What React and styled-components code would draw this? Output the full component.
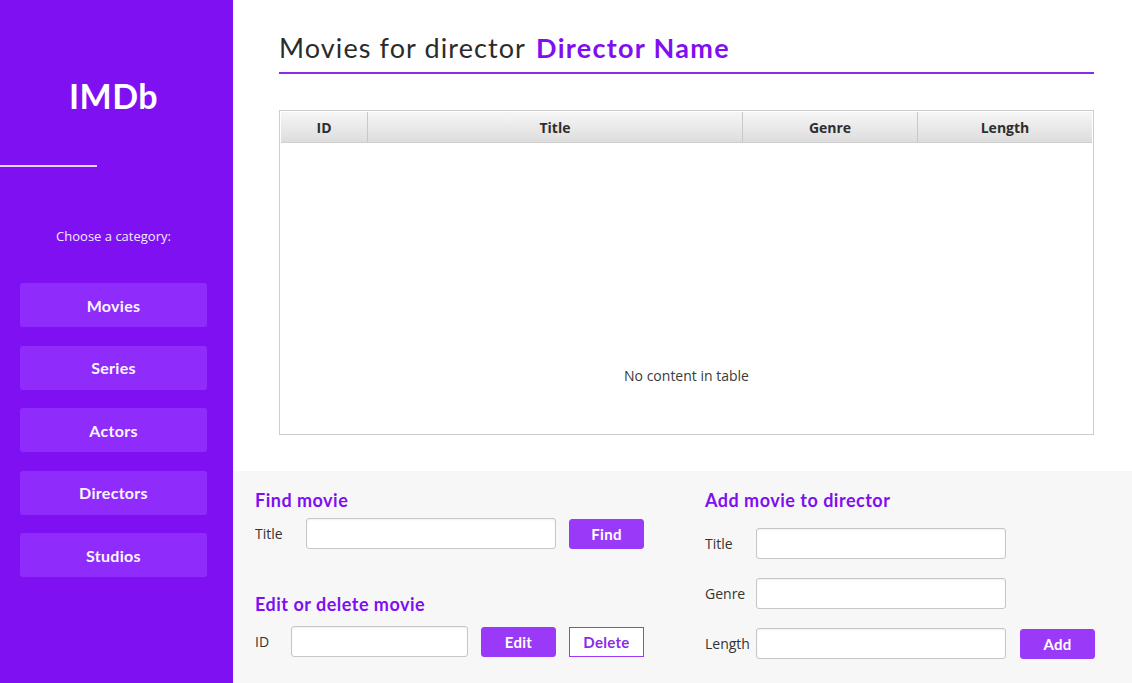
import React from "react";
import styled, { createGlobalStyle } from "styled-components";

const Global = createGlobalStyle`
  html, body { margin: 0; padding: 0; }
  body { font-family: "Open Sans", "Noto Sans", sans-serif; background: #fff; }
  * { box-sizing: border-box; }
`;

const GEO = `"Lato", "DejaVu Sans", sans-serif`;
const UI = `"Open Sans", "Noto Sans", sans-serif`;

const Page = styled.div`
  display: flex;
  width: 1132px;
  height: 683px;
  overflow: hidden;
`;

const Sidebar = styled.aside`
  width: 233px;
  flex: none;
  background: #7f10f2;
  display: flex;
  flex-direction: column;
  align-items: center;
  padding-right: 6px;
`;

const Logo = styled.h1`
  margin: 74px 0 0;
  font-family: ${GEO};
  font-weight: 700;
  font-size: 34px;
  line-height: 44px;
  color: #fff;
  letter-spacing: 0.5px;
`;

const Rule = styled.div`
  align-self: flex-start;
  width: 97px;
  height: 2px;
  margin-top: 47px;
  background: #e6d4fb;
`;

const Prompt = styled.p`
  margin: 60px 0 0;
  font-family: ${UI};
  font-size: 13px;
  line-height: 18px;
  color: #f3eafd;
`;

const Nav = styled.nav`
  display: flex;
  flex-direction: column;
  gap: 18.5px;
  margin-top: 38px;
`;

const NavButton = styled.button`
  width: 187px;
  height: 44px;
  border: none;
  border-radius: 3px;
  background: #8f2cfb;
  color: #fbf6ff;
  font-family: ${GEO};
  font-weight: 700;
  font-size: 16px;
  letter-spacing: 0.3px;
  cursor: pointer;
`;

const Main = styled.main`
  flex: 1;
  display: flex;
  flex-direction: column;
`;

const Top = styled.section`
  height: 471px;
  padding: 30px 38px 0 46px;
  background: #fff;
`;

const Heading = styled.h2`
  margin: 0;
  padding-bottom: 6px;
  border-bottom: 2px solid #8a2be8;
  display: flex;
  align-items: baseline;
  gap: 10px;
  font-family: ${GEO};
  font-weight: 400;
  font-size: 27px;
  line-height: 36px;
  letter-spacing: 1.1px;
  color: #2b2b2b;
`;

const Accent = styled.span`
  font-weight: 700;
  letter-spacing: 1.3px;
  color: #7f0ff0;
`;

const Table = styled.div`
  margin-top: 36px;
  height: 325px;
  border: 1px solid #cdcdcd;
  padding: 1px;
  display: flex;
  flex-direction: column;
  background: #fff;
`;

const HeadRow = styled.div`
  display: grid;
  grid-template-columns: 87px 375px 175px 1fr;
  height: 31px;
  background: linear-gradient(#f6f6f6, #dddddd);
  border-bottom: 1px solid #cfcfcf;
`;

const HeadCell = styled.div`
  display: flex;
  align-items: center;
  justify-content: center;
  border-right: 1px solid #c8c8c8;
  font-family: ${UI};
  font-weight: 700;
  font-size: 14px;
  color: #2e2e2e;
  &:last-child { border-right: none; }
`;

const Empty = styled.div`
  flex: 1;
  display: flex;
  align-items: flex-end;
  justify-content: center;
  padding-bottom: 48px;
  font-family: ${UI};
  font-size: 14px;
  color: #3a3a3a;
`;

const Bottom = styled.section`
  flex: 1;
  background: #f7f7f7;
  display: grid;
  grid-template-columns: 450px 1fr;
  padding: 18px 0 0 22px;
`;

const Column = styled.div`
  display: flex;
  flex-direction: column;
`;

const SectionTitle = styled.h3`
  margin: ${(p) => p.$mt || 0}px 0 0;
  font-family: ${GEO};
  font-weight: 700;
  font-size: 18px;
  line-height: 22px;
  letter-spacing: 0.5px;
  color: #7f0ff0;
`;

const Row = styled.div`
  display: flex;
  align-items: center;
  margin-top: ${(p) => p.$mt || 0}px;
  height: 31px;
`;

const Label = styled.label`
  width: ${(p) => p.$w}px;
  flex: none;
  font-family: ${UI};
  font-size: 14px;
  color: #333;
`;

const Input = styled.input`
  width: ${(p) => p.$w}px;
  height: 31px;
  flex: none;
  border: 1px solid #c6c6c6;
  border-radius: 3px;
  background: #fff;
  box-shadow: inset 0 1px 2px rgba(0, 0, 0, 0.06);
  outline: none;
`;

const Action = styled.button`
  width: ${(p) => p.$w || 75}px;
  height: 30px;
  flex: none;
  margin-left: ${(p) => p.$ml || 13}px;
  border-radius: ${(p) => (p.$outline ? 0 : 3)}px;
  border: 1px solid #9a3af8;
  background: ${(p) => (p.$outline ? "#fff" : "#9a3af8")};
  color: ${(p) => (p.$outline ? "#8a2be8" : "#fff")};
  font-family: ${GEO};
  font-weight: 700;
  font-size: 15px;
  letter-spacing: 0.3px;
  padding: 0;
  cursor: pointer;
`;

const categories = ["Movies", "Series", "Actors", "Directors", "Studios"];
const columns = ["ID", "Title", "Genre", "Length"];

export default function App() {
  return (
    <>
      <Global />
      <Page>
        <Sidebar>
          <Logo>IMDb</Logo>
          <Rule />
          <Prompt>Choose a category:</Prompt>
          <Nav>
            {categories.map((c) => (
              <NavButton key={c}>{c}</NavButton>
            ))}
          </Nav>
        </Sidebar>
        <Main>
          <Top>
            <Heading>
              Movies for director <Accent>Director Name</Accent>
            </Heading>
            <Table>
              <HeadRow>
                {columns.map((c) => (
                  <HeadCell key={c}>{c}</HeadCell>
                ))}
              </HeadRow>
              <Empty>No content in table</Empty>
            </Table>
          </Top>
          <Bottom>
            <Column>
              <SectionTitle>Find movie</SectionTitle>
              <Row $mt={7}>
                <Label $w={51}>Title</Label>
                <Input $w={250} />
                <Action $w={75}>Find</Action>
              </Row>
              <SectionTitle $mt={44}>Edit or delete movie</SectionTitle>
              <Row $mt={11}>
                <Label $w={36}>ID</Label>
                <Input $w={177} />
                <Action $w={75}>Edit</Action>
                <Action $w={75} $outline>
                  Delete
                </Action>
              </Row>
            </Column>
            <Column>
              <SectionTitle>Add movie to director</SectionTitle>
              <Row $mt={17}>
                <Label $w={51}>Title</Label>
                <Input $w={250} />
              </Row>
              <Row $mt={19}>
                <Label $w={51}>Genre</Label>
                <Input $w={250} />
              </Row>
              <Row $mt={19}>
                <Label $w={51}>Length</Label>
                <Input $w={250} />
                <Action $w={75} $ml={14}>
                  Add
                </Action>
              </Row>
            </Column>
          </Bottom>
        </Main>
      </Page>
    </>
  );
}
